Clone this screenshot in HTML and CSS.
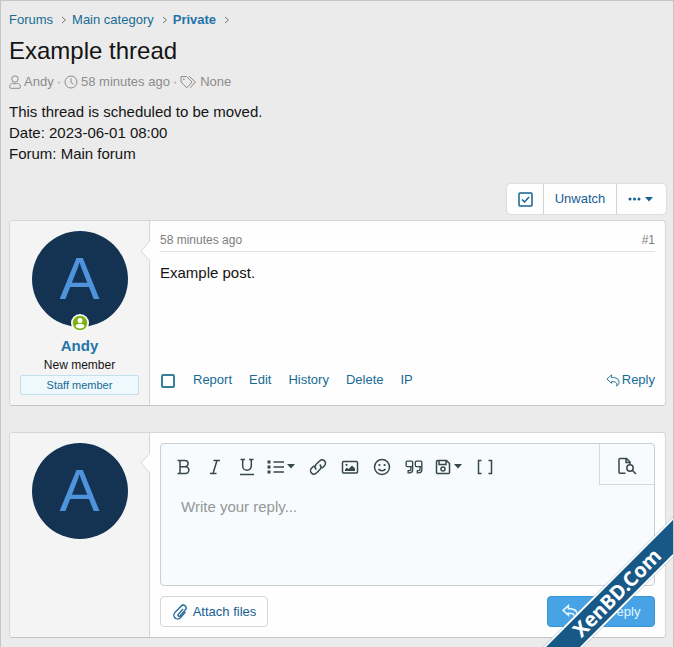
FILE: index.html
```html
<!DOCTYPE html>
<html lang="en">
<head>
    <meta charset="UTF-8">
    <meta name="viewport" content="width=device-width, initial-scale=1.0">
    <title>Example thread</title>
    <link rel="stylesheet" href="styles.css">
</head>
<body>
<div class="page">
    <nav class="breadcrumbs">
        <a href="#">Forums</a>
        <svg class="chevron" viewBox="0 0 6 8"><path d="M1 1l3.500 3L1 7"/></svg>
        <a href="#">Main category</a>
        <svg class="chevron" viewBox="0 0 6 8"><path d="M1 1l3.500 3L1 7"/></svg>
        <a href="#" class="current">Private</a>
        <svg class="chevron" viewBox="0 0 6 8"><path d="M1 1l3.500 3L1 7"/></svg>
    </nav>

    <h1>Example thread</h1>
    <div class="meta">
        <svg class="icon-user" viewBox="0 0 12 14"><circle cx="6" cy="4" r="3.200"/><path d="M3.500 8.200C1.800 8.500.7 9.700.7 11.200v1.100c0 .6.4 1 1 1h8.600c.6 0 1-.4 1-1v-1.100c0-1.500-1.100-2.700-2.800-3-1.500.8-3.500.8-5 0z"/></svg>
        <span>Andy</span>
        <span>&middot;</span>
        <svg class="icon-clock" viewBox="0 0 14 14"><circle cx="7" cy="7" r="6"/><path d="M7 3.200v4.300l2.500 1.800"/></svg>
        <span>58 minutes ago</span>
        <span>&middot;</span>
        <svg class="icon-tags" viewBox="0 0 17 14"><path d="M1 1.500h5.500l5.600 5.500-5.300 5.800L1 7zM9 1.200l6.500 5.800-5.300 5.800"/><circle cx="3.800" cy="4.200" r=".5"/></svg>
        <span>None</span>
    </div>
    <p class="notice">This thread is scheduled to be moved.<br>Date: 2023-06-01 08:00<br>Forum: Main forum</p>

    <div class="actions">
        <div class="button-group">
            <button type="button" class="button-select" aria-label="Select for moderation">
                <svg class="icon-check" viewBox="0 0 15 15"><rect x="1" y="1" width="13" height="13" rx="1"/><path d="M4 7.500l2.500 2.500L11 5"/></svg>
            </button>
            <button type="button" class="button-watch">Unwatch</button>
            <button type="button" class="button-more" aria-label="More options">
                <svg class="icon-more" viewBox="0 0 28 8"><circle cx="2" cy="4" r="1.500"/><circle cx="6.500" cy="4" r="1.500"/><circle cx="11" cy="4" r="1.500"/><path d="M17 2h8l-4 4.500z"/></svg>
            </button>
        </div>
    </div>

    <article class="message">
        <div class="user">
            <div class="avatar-wrap">
                <span class="avatar">A</span>
                <svg class="online" viewBox="0 0 18 18"><circle class="ring" cx="9" cy="9" r="9"/><circle class="dot" cx="9" cy="9" r="7.300"/><circle class="ring" cx="9" cy="6.500" r="2.500"/><path class="ring" d="M4.500 12.500c0-3.600 9-3.600 9 0-1.800 2.500-7.200 2.500-9 0z"/></svg>
            </div>
            <a href="#" class="username">Andy</a>
            <div class="user-title">New member</div>
            <div class="banner">Staff member</div>
        </div>
        <div class="content">
            <svg class="pointer" viewBox="0 0 10 20"><path d="M10 0L1 10l9 10"/></svg>
            <header class="post-header">
                <time>58 minutes ago</time>
                <a href="#">#1</a>
            </header>
            <div class="post-body">Example post.</div>
            <footer class="post-footer">
                <input type="checkbox" aria-label="Select post">
                <a href="#">Report</a>
                <a href="#">Edit</a>
                <a href="#">History</a>
                <a href="#">Delete</a>
                <a href="#">IP</a>
                <a href="#" class="reply"><svg class="icon-reply" viewBox="0 0 15 14"><path d="M1 5.500L6 1v2.800c5 0 8 1.200 8 5 0 1.800-1 3.200-2.500 4.200.8-3.500-.8-4.800-5.500-4.800V10z"/></svg>Reply</a>
            </footer>
        </div>
    </article>

    <form class="message reply-form">
        <div class="user">
            <span class="avatar">A</span>
        </div>
        <div class="content">
            <svg class="pointer" viewBox="0 0 10 20"><path d="M10 0L1 10l9 10"/></svg>
            <div class="editor">
                <div class="toolbar">
                    <button type="button" aria-label="Bold"><svg viewBox="0 0 18 18"><path d="M3.500 2.500h7.500a3 3 0 0 1 0 6.200H6M10.500 8.700h1a3.300 3.300 0 0 1 0 6.800h-8M6 2.500v13"/></svg></button>
                    <button type="button" aria-label="Italic"><svg viewBox="0 0 18 18"><path d="M7.500 2.500h6.500M4 15.500h6.500M11 2.500L7 15.500"/></svg></button>
                    <button type="button" aria-label="Underline"><svg viewBox="0 0 18 18"><path d="M2.500 1.500H7M11 1.500h4.500M4.700 1.500V8a4.300 4.300 0 0 0 8.600 0V1.500M2 16.500h14"/></svg></button>
                    <button type="button" class="wide" aria-label="List"><svg viewBox="0 0 18 18"><path d="M6.500 4H17M6.500 9H17M6.500 14H17"/><path class="fill" d="M.5 2.500h3v3h-3zM.5 7.500h3v3h-3zM.5 12.500h3v3h-3z"/></svg><svg class="caret" viewBox="0 0 8 5"><path d="M0 0h8L4 4.500z"/></svg></button>
                    <button type="button" aria-label="Insert link"><svg viewBox="0 0 18 18"><path d="M7.200 11.500C5.700 10 5.700 8 7 6.600l3.600-3.700a3.400 3.400 0 0 1 4.900 4.800L13 10.200M10.800 6.500c1.500 1.500 1.500 3.500.2 4.900l-3.600 3.700a3.400 3.400 0 0 1-4.900-4.800L5 7.800"/></svg></button>
                    <button type="button" aria-label="Insert image"><svg viewBox="0 0 18 18"><rect x="1.500" y="3.500" width="15" height="11.500" rx="1"/><path class="fill" d="M4 13v-1.500l2-2L7.500 11 11 7.500l3 3V13z"/><circle class="fill" cx="5.500" cy="6.800" r="1.100"/></svg></button>
                    <button type="button" aria-label="Smilies"><svg viewBox="0 0 18 18"><circle cx="9" cy="9" r="7.500"/><path d="M5.500 11c1.700 2.300 5.300 2.300 7 0"/><circle class="fill" cx="6.400" cy="7" r="1.100"/><circle class="fill" cx="11.600" cy="7" r="1.100"/></svg></button>
                    <button type="button" aria-label="Quote"><svg viewBox="0 0 20 18"><path d="M8.500 8.500h-6A1.200 1.200 0 0 1 1.300 7.300V3.700a1.200 1.200 0 0 1 1.200-1.200h4.800a1.200 1.200 0 0 1 1.200 1.200V12a3.500 3.500 0 0 1-3.500 3.500H3.500V13H5a1.500 1.500 0 0 0 1.500-1.500v-3M18.700 8.500h-6a1.200 1.200 0 0 1-1.200-1.200V3.700a1.200 1.200 0 0 1 1.200-1.200h4.800a1.200 1.200 0 0 1 1.200 1.200V12a3.500 3.500 0 0 1-3.500 3.500h-1.500V13h1.500a1.500 1.500 0 0 0 1.500-1.500v-3"/></svg></button>
                    <button type="button" class="wide" aria-label="Drafts"><svg viewBox="0 0 18 18"><path d="M3.500 2.500h9l3 3v9a1 1 0 0 1-1 1h-11a1 1 0 0 1-1-1v-11a1 1 0 0 1 1-1zM5 2.500v4h7v-4"/><circle cx="9" cy="11" r="2"/></svg><svg class="caret" viewBox="0 0 8 5"><path d="M0 0h8L4 4.500z"/></svg></button>
                    <button type="button" aria-label="Toggle BB code"><svg viewBox="0 0 18 18"><path d="M5.500 2.500h-3v13h3M12.500 2.500h3v13h-3"/></svg></button>
                    <button type="button" class="preview" aria-label="Preview"><svg viewBox="0 0 20 18"><path d="M8.500 16.200H3a1 1 0 0 1-1-1V2.500a1 1 0 0 1 1-1h6.500L13 5v2M9 1.500v4h4"/><circle cx="13" cy="11" r="3.200"/><path d="M15.500 13.500l3.500 3.500"/></svg></button>
                </div>
                <textarea placeholder="Write your reply..." aria-label="Write your reply"></textarea>
            </div>
            <div class="form-footer">
                <button type="button" class="attach"><svg viewBox="0 0 18 18"><path d="M12.500 5.500L7 11.700a1.300 1.300 0 0 0 2 1.700l6.200-7a3.200 3.200 0 0 0-4.800-4.200L3.200 9.700a4.200 4.200 0 0 0 6.200 5.700l5.800-6.500"/></svg>Attach files</button>
                <button type="submit" class="post"><svg viewBox="0 0 15 14"><path d="M1 5.500L6 1v2.800c5 0 8 1.200 8 5 0 1.800-1 3.200-2.500 4.200.8-3.500-.8-4.800-5.500-4.800V10z"/></svg>Post reply</button>
            </div>
        </div>
    </form>

    <div class="ribbon">XenBD.Com</div>
</div>
</body>
</html>
```

FILE: styles.css
```css
* {
    box-sizing: border-box;
}

body {
    margin: 0;
    font-family: "Liberation Sans", Arial, sans-serif;
    font-size: 13px;
    line-height: 20px;
    color: #141414;
    background-color: #ebebeb;
}

a {
    color: #176b94;
    text-decoration: none;
}

button {
    display: flex;
    align-items: center;
    justify-content: center;
    padding: 0;
    border: 0;
    background: none;
    font: inherit;
    color: #176093;
}

svg {
    fill: none;
    stroke: currentColor;
}

.page {
    position: relative;
    overflow: hidden;
    border: 1px solid #c6c6c6;
    padding: 9px 7px 9px 8px;
}

.breadcrumbs {
    display: flex;
    align-items: center;
    gap: 7px;
}

.breadcrumbs .current {
    font-weight: bold;
    color: #1f74a8;
}

.chevron {
    width: 6px;
    height: 8px;
    margin-left: 1px;
    margin-right: -2px;
    color: #777;
}

h1 {
    margin: 6px 0;
    font-size: 24px;
    font-weight: normal;
    line-height: 30px;
}

.meta {
    display: flex;
    align-items: center;
    gap: 3px;
    color: #8c8c8c;
}

.icon-user {
    width: 12px;
    height: 14px;
}

.icon-clock {
    width: 14px;
    height: 14px;
}

.icon-tags {
    width: 17px;
    height: 14px;
}

.notice {
    margin: 9px 0 20px;
    font-size: 15px;
    line-height: 21px;
}

.actions {
    display: flex;
    justify-content: flex-end;
    margin-bottom: 6px;
}

.button-group {
    display: flex;
    height: 30px;
    border-radius: 4px;
    background: #fefefe;
    box-shadow: 0 0 2px #bbb;
}

.button-group button + button {
    border-left: 1px solid #d2d2d2;
}

.button-select {
    width: 36px;
}

.button-watch {
    width: 73px;
}

.button-more {
    width: 50px;
}

.icon-check {
    width: 15px;
    height: 15px;
    stroke-width: 1.5;
}

.icon-more {
    width: 28px;
    height: 8px;
    fill: currentColor;
    stroke: none;
}

.message {
    display: flex;
    margin-bottom: 26px;
    border: 1px solid #d6d6d6;
    border-bottom-color: #c4c4c4;
    border-radius: 4px;
    background: #fefefe;
}

.reply-form {
    margin-bottom: 0;
}

.user {
    display: flex;
    flex-direction: column;
    align-items: center;
    width: 140px;
    padding: 10px;
    border-right: 1px solid #d6d6d6;
    border-radius: 4px 0 0 4px;
    background: #f4f4f4;
}

.avatar-wrap {
    position: relative;
    margin-bottom: 9px;
}

.avatar {
    display: block;
    width: 96px;
    height: 96px;
    border-radius: 50%;
    background: #143352;
    color: #4f93dc;
    font-size: 60px;
    line-height: 96px;
    text-align: center;
}

.online {
    position: absolute;
    bottom: -5px;
    left: 39px;
    width: 18px;
    height: 18px;
    stroke: none;
}

.online .ring {
    fill: #fff;
}

.online .dot {
    fill: #7fb117;
}

.username {
    font-size: 15px;
    font-weight: bold;
    color: #1f74a8;
}

.user-title {
    font-size: 12px;
    line-height: 18px;
}

.banner {
    width: 100%;
    margin-top: 1px;
    border: 1px solid #c2dff0;
    border-radius: 2px;
    background: #eef8fd;
    color: #176b94;
    font-size: 11px;
    line-height: 18px;
    text-align: center;
}

.content {
    position: relative;
    display: flex;
    flex: 1;
    flex-direction: column;
    padding: 10px;
}

/* little arrow that points at the avatar */
.pointer {
    position: absolute;
    top: 20px;
    left: -10px;
    width: 10px;
    height: 20px;
    fill: #fefefe;
    stroke: #d6d6d6;
}

.post-header {
    display: flex;
    justify-content: space-between;
    padding-bottom: 2px;
    border-bottom: 1px solid #e3e3e3;
    font-size: 12px;
    line-height: 18px;
    color: #808080;
}

.post-header a {
    color: #808080;
}

.post-body {
    flex: 1;
    padding-top: 10px;
    font-size: 15px;
    line-height: 21px;
}

.post-footer {
    display: flex;
    align-items: center;
    gap: 17px;
    margin-bottom: 5px;
}

.post-footer input {
    appearance: none;
    width: 14px;
    height: 14px;
    margin: 2px 1px 0;
    border: 2px solid #36809c;
    border-radius: 2px;
}

.reply {
    display: flex;
    align-items: center;
    gap: 2px;
    margin-left: auto;
}

.icon-reply {
    width: 14px;
    height: 13px;
}

.editor {
    border: 1px solid #c9d0d3;
    border-radius: 4px;
    background: #f7fbfd;
}

.toolbar {
    display: flex;
    height: 41px;
    padding-left: 6px;
}

.toolbar button {
    width: 32px;
    padding-top: 4px;
    color: #37474b;
}

.toolbar svg {
    width: 18px;
    height: 18px;
    stroke-width: 1.5;
}

.toolbar .wide {
    width: 39px;
    padding-right: 4px;
    gap: 2px;
}

.toolbar .fill {
    fill: currentColor;
    stroke: none;
}

.toolbar .caret {
    width: 8px;
    height: 5px;
    fill: currentColor;
    stroke: none;
}

.toolbar .preview {
    width: 55px;
    margin-left: auto;
    border-left: 1px solid #d6d9da;
    border-bottom: 1px solid #d6d9da;
}

.toolbar .preview svg {
    width: 20px;
}

.editor textarea {
    display: block;
    width: 100%;
    height: 100px;
    padding: 11px 20px;
    border: 0;
    background: none;
    font: inherit;
    font-size: 15px;
    line-height: 21px;
    resize: none;
}

.editor textarea::placeholder {
    color: #949799;
}

.form-footer {
    display: flex;
    justify-content: space-between;
    margin-top: 10px;
}

.form-footer button {
    width: 108px;
    height: 31px;
    gap: 5px;
    border-radius: 4px;
}

.form-footer .attach {
    border: 1px solid #d6d6d6;
}

.form-footer svg {
    width: 16px;
    height: 16px;
    stroke-width: 1.5;
}

.form-footer .post {
    border: 1px solid #3996d6;
    background: #47a3e6;
    color: #e2f8ff;
}

/* corner ribbon, runs over the reply button */
.ribbon {
    position: absolute;
    right: -44px;
    bottom: 40px;
    width: 200px;
    border: 2px solid #fff;
    background: #185886;
    color: #fff;
    font-family: "Noto Sans", sans-serif;
    font-size: 20px;
    font-weight: bold;
    line-height: 24px;
    text-align: center;
    transform: rotate(-45deg);
}
```
